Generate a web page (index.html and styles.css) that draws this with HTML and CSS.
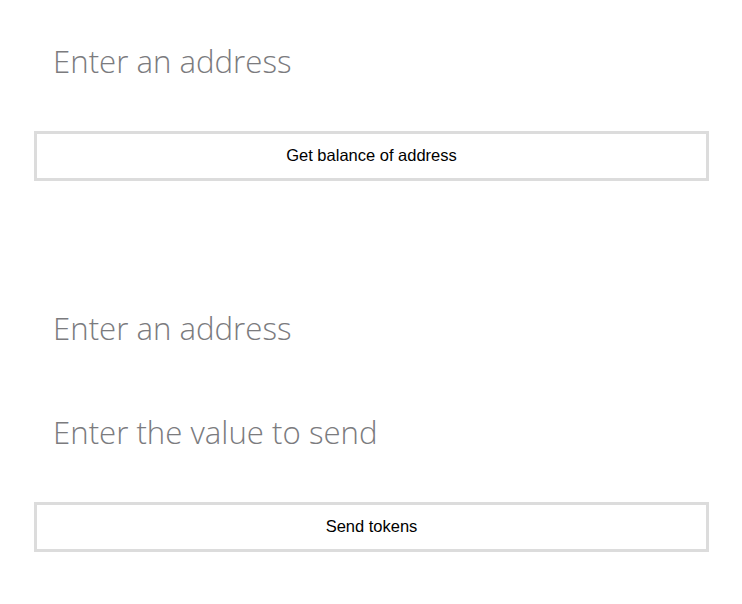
FILE: index.html
```html
<!DOCTYPE html>
<html>
<head>
<meta charset="utf-8">
<link rel="stylesheet" href="styles.css">
</head>
<body>
<div class="page">
  <section class="block balance">
    <input class="field" type="text" placeholder="Enter an address">
    <button class="action">Get balance of address</button>
  </section>
  <section class="block send">
    <input class="field" type="text" placeholder="Enter an address">
    <input class="field field-gap" type="text" placeholder="Enter the value to send">
    <button class="action">Send tokens</button>
  </section>
</div>
</body>
</html>
```
FILE: styles.css
```css
html, body {
  margin: 0;
  padding: 0;
  background: #ffffff;
}
.page {
  display: flex;
  flex-direction: column;
  padding: 29px 33px 0 34px;
}
.block {
  display: flex;
  flex-direction: column;
}
.send {
  margin-top: 115px;
}
.field {
  box-sizing: border-box;
  width: 675px;
  height: 60px;
  border: none;
  outline: none;
  padding: 3px 19px 0;
  margin: 0;
  font-family: "Open Sans", sans-serif;
  font-weight: 300;
  font-size: 31.2px;
  color: #555;
  background: transparent;
}
.field::placeholder {
  color: #7b7b7e;
  opacity: 1;
}
.field-gap {
  margin-top: 44px;
}
.action {
  box-sizing: border-box;
  width: 675px;
  height: 50px;
  margin-top: 42px;
  border: 3px solid #dcdcdc;
  background: #ffffff;
  font-family: "Liberation Sans", Arial, sans-serif;
  font-size: 16.5px;
  color: #000;
  padding: 0 0 2px;
}
```
